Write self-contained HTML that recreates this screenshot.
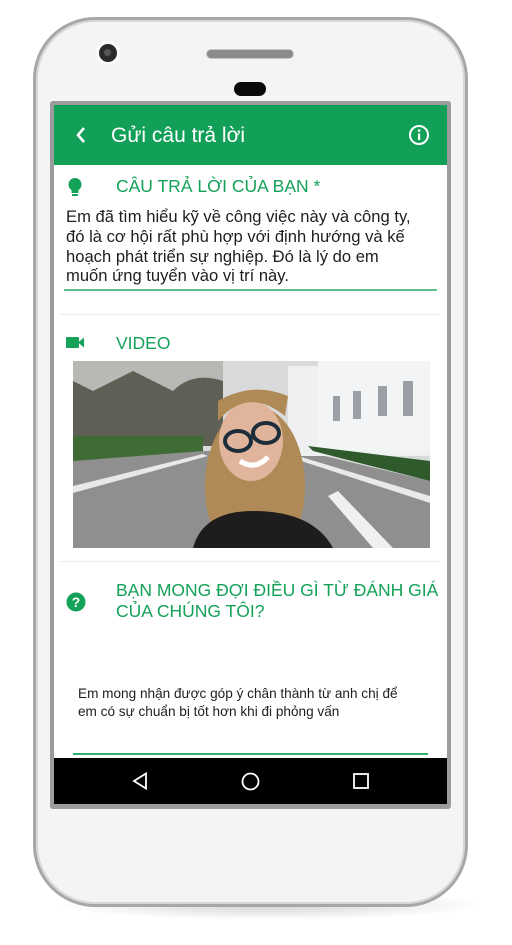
<!DOCTYPE html>
<html><head><meta charset="utf-8"><style>
*{margin:0;padding:0;box-sizing:border-box}
body{width:512px;height:945px;background:#fff;position:relative;overflow:hidden;font-family:"Liberation Sans","DejaVu Sans",sans-serif}
.shadow{position:absolute;left:55px;top:890px;width:430px;height:30px;border-radius:50%;background:radial-gradient(ellipse at center,rgba(0,0,0,.18),rgba(0,0,0,0) 70%)}
.phone{position:absolute;left:33px;top:17px;width:435px;height:890px;border-radius:62px;background:#f3f4f6;border:3px solid #a9a6a6;box-shadow:inset 0 0 0 2px #d8d6d6}
.frame{position:absolute;left:50px;top:101px;width:401px;height:708px;background:#9d9b9b;border-radius:3px}
.screen{position:absolute;left:54px;top:105px;width:393px;height:699px;background:#fff;overflow:hidden}
.hdr{position:absolute;left:0;top:0;width:393px;height:60px;background:#12a058;color:#fff}
.g{color:#14a158;position:absolute;font-size:17.5px}
.t{position:absolute;color:#1e1e1e}
.nav{position:absolute;left:0;top:653px;width:393px;height:46px;background:#000}
</style></head><body>
<div class="shadow"></div>
<div class="phone"></div>
<div style="position:absolute;left:96px;top:41px;width:24px;height:24px;border-radius:50%;background:#fafafa"></div>
<div style="position:absolute;left:99px;top:44px;width:18px;height:18px;border-radius:50%;background:#2a2a2a"></div>
<div style="position:absolute;left:104px;top:49px;width:7px;height:7px;border-radius:50%;background:#555"></div>
<div style="position:absolute;left:206px;top:49px;width:88px;height:10px;border-radius:5px;background:#8a8a8a;border:1px solid #c8c8c8"></div>
<div style="position:absolute;left:234px;top:82px;width:32px;height:14px;border-radius:7px;background:#0a0a0a"></div>
<div class="frame"></div>
<div class="screen">
 <div class="hdr">
  <svg style="position:absolute;left:20px;top:21px" width="14" height="18"><path d="M10 2 L4 9 L10 16" stroke="#fff" stroke-width="2.6" fill="none"/></svg>
  <div style="position:absolute;left:57px;top:19px;font-size:21px">Gửi câu trả lời</div>
  <svg style="position:absolute;left:354px;top:19px" width="22" height="22"><circle cx="11" cy="11" r="9" stroke="#fff" stroke-width="2" fill="none"/><rect x="10" y="9.5" width="2.2" height="6.5" fill="#fff"/><circle cx="11.1" cy="6.6" r="1.3" fill="#fff"/></svg>
 </div>
 <svg style="position:absolute;left:13px;top:72px" width="16" height="22"><circle cx="8" cy="7.5" r="6.5" fill="#14a158"/><rect x="4.5" y="10" width="7" height="6" fill="#14a158"/><rect x="5" y="17" width="6" height="2" fill="#14a158"/></svg>
 <div class="g" style="left:62px;top:71px">CÂU TRẢ LỜI CỦA BẠN *</div>
 <div class="t" style="left:12px;top:102px;font-size:16.6px;line-height:19.8px;width:380px">Em đã tìm hiểu kỹ về công việc này và công ty,<br>đó là cơ hội rất phù hợp với định hướng và kế<br>hoạch phát triển sự nghiệp. Đó là lý do em<br>muốn ứng tuyển vào vị trí này.</div>
 <div style="position:absolute;left:10px;top:184px;width:373px;height:2px;background:#5fbf8a"></div>
 <div style="position:absolute;left:6px;top:209px;width:381px;height:1px;background:#ececec"></div>
 <svg style="position:absolute;left:12px;top:231px" width="19" height="13"><rect x="0" y="1" width="13" height="11" rx="1" fill="#14a158"/><path d="M12 6.5 L18 1.5 L18 11.5 Z" fill="#14a158"/></svg>
 <div class="g" style="left:62px;top:228px">VIDEO</div>
 <svg style="position:absolute;left:19px;top:256px" width="357" height="187" viewBox="0 0 357 187">
  <rect width="357" height="187" fill="#d9dadc"/>
  <rect x="0" y="0" width="150" height="85" fill="#5e5f55"/>
  <path d="M0 0 L150 0 L150 20 Q120 10 100 30 L60 10 L20 30 L0 20Z" fill="#b8b8b4"/>
  <rect x="0" y="75" width="130" height="30" fill="#3f6b35"/>
  <path d="M0 100 L130 90 L230 90 L357 120 L357 187 L0 187Z" fill="#8f8f8f"/>
  <path d="M0 125 L130 93 L135 95 L0 132Z" fill="#e8e8e8"/>
  <rect x="215" y="5" width="142" height="90" fill="#eef0f2"/>
  <rect x="245" y="0" width="112" height="90" fill="#f3f4f5"/>
  <g fill="#9aa0a6"><rect x="330" y="20" width="10" height="35"/><rect x="305" y="25" width="9" height="30"/><rect x="280" y="30" width="8" height="28"/><rect x="260" y="35" width="7" height="25"/></g>
  <path d="M235 85 L357 100 L357 120 L240 90Z" fill="#2f5a2c"/>
  <path d="M225 95 L357 135 L357 142 L222 98Z" fill="#e9e9e9"/>
  <path d="M265 130 L320 187 L300 187 L255 135Z" fill="#f0f0f0"/>
  <ellipse cx="182" cy="125" rx="50" ry="80" fill="#b08a56"/>
  <path d="M120 187 Q130 150 180 150 Q240 150 260 187Z" fill="#1e1c1c"/>
  <ellipse cx="178" cy="80" rx="32" ry="40" fill="#e1b49c"/>
  <path d="M145 60 Q175 25 212 55 L215 35 Q180 20 145 40Z" fill="#b08a56"/>
  <ellipse cx="165" cy="80" rx="13" ry="10" fill="none" stroke="#1d2d3a" stroke-width="4"/>
  <ellipse cx="193" cy="72" rx="13" ry="10" fill="none" stroke="#1d2d3a" stroke-width="4"/>
  <path d="M167 100 Q182 110 195 96" stroke="#fff" stroke-width="5" fill="none"/>
 </svg>
 <div style="position:absolute;left:6px;top:456px;width:381px;height:1px;background:#ececec"></div>
 <svg style="position:absolute;left:12px;top:487px" width="20" height="20"><circle cx="10" cy="10" r="9.5" fill="#14a158"/><text x="10" y="15" font-size="14" font-weight="bold" fill="#fff" text-anchor="middle" font-family="Liberation Sans">?</text></svg>
 <div class="g" style="left:62px;top:475px;line-height:20.5px;font-size:17.5px;width:340px">BẠN MONG ĐỢI ĐIỀU GÌ TỪ ĐÁNH GIÁ<br>CỦA CHÚNG TÔI?</div>
 <div class="t" style="left:24px;top:580px;font-size:13.6px;line-height:17.5px;width:360px">Em mong nhận được góp ý chân thành từ anh chị để<br>em có sự chuẩn bị tốt hơn khi đi phỏng vấn</div>
 <div style="position:absolute;left:19px;top:648px;width:355px;height:1.5px;background:#2fb06a"></div>
 <div class="nav">
  <svg style="position:absolute;left:78px;top:14px" width="16" height="18"><path d="M14 1.5 L2 9 L14 16.5Z" stroke="#fff" stroke-width="1.8" fill="none"/></svg>
  <svg style="position:absolute;left:187px;top:14px" width="19" height="19"><circle cx="9.5" cy="9.5" r="8" stroke="#fff" stroke-width="1.8" fill="none"/></svg>
  <svg style="position:absolute;left:299px;top:15px" width="16" height="16"><rect x="1" y="1" width="14" height="14" stroke="#fff" stroke-width="1.8" fill="none"/></svg>
 </div>
</div>
</body></html>
